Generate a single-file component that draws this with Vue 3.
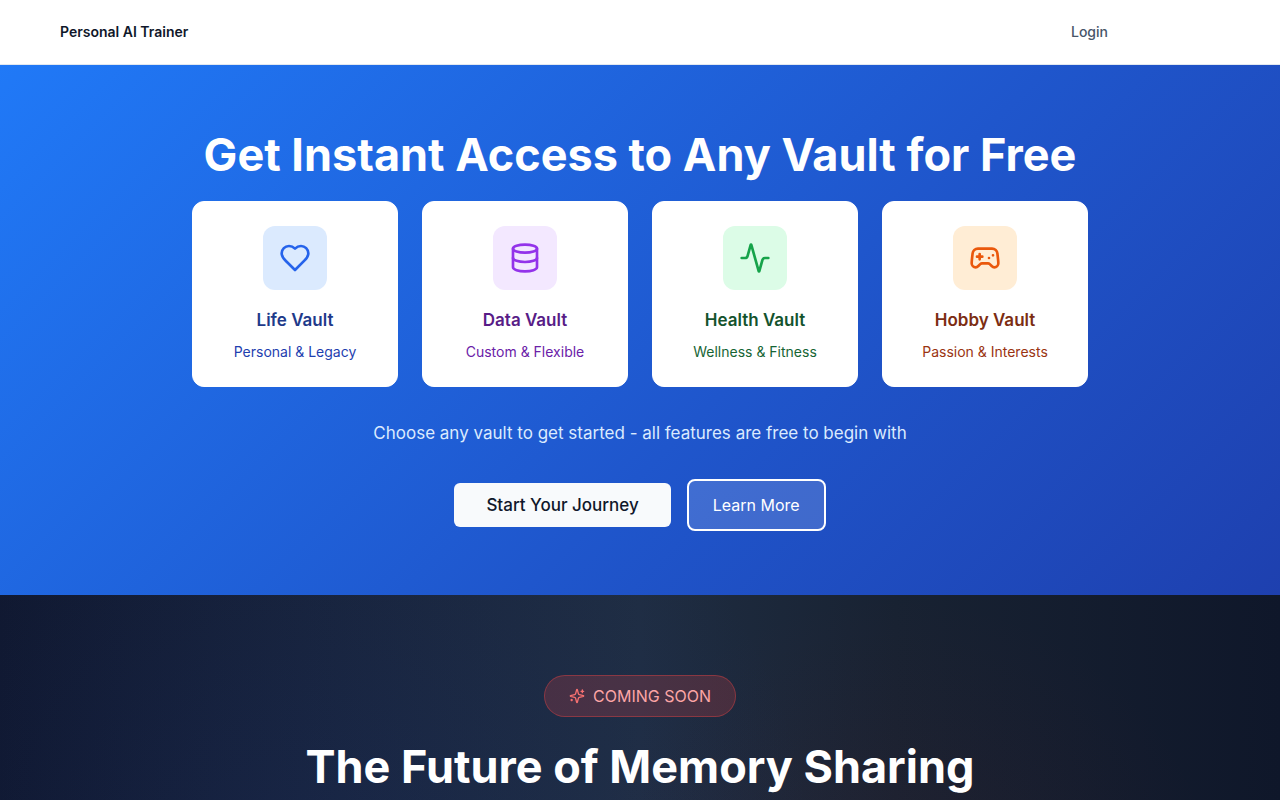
<template>
  <div class="page">
    <header class="topbar">
      <div class="topbar-inner">
        <a href="#" class="brand">Personal AI Trainer</a>
        <a href="#login" class="login">Login</a>
      </div>
    </header>

    <main>
      <section class="hero">
        <h1 class="headline">Get Instant Access to Any Vault for Free</h1>
        <div class="vaults">
          <article v-for="vault in vaults" :key="vault.key" class="vault" :class="vault.key">
            <div class="vault-icon">
              <svg viewBox="0 0 24 24" class="icon" aria-hidden="true">
                <path v-for="d in vault.paths" :key="d" :d="d" />
              </svg>
            </div>
            <h3 class="vault-title">{{ vault.title }}</h3>
            <p class="vault-text">{{ vault.text }}</p>
          </article>
        </div>
        <p class="hero-text">Choose any vault to get started - all features are free to begin with</p>
        <div class="actions">
          <button type="button" class="btn-start">Start Your Journey</button>
          <button type="button" class="btn-more">Learn More</button>
        </div>
      </section>

      <section id="future" class="future">
        <div class="badge">
          <svg viewBox="0 0 24 24" class="icon badge-icon" aria-hidden="true">
            <path d="M9.937 15.5A2 2 0 0 0 8.5 14.063l-6.135-1.582a.5.5 0 0 1 0-.962L8.5 9.936A2 2 0 0 0 9.937 8.5l1.582-6.135a.5.5 0 0 1 .963 0L14.063 8.5A2 2 0 0 0 15.5 9.937l6.135 1.581a.5.5 0 0 1 0 .964L15.5 14.063a2 2 0 0 0-1.437 1.437l-1.582 6.135a.5.5 0 0 1-.963 0z" />
            <path d="M20 3v4M22 5h-4M4 17v2M5 18H3" />
          </svg>
          <span>COMING SOON</span>
        </div>
        <h2 class="headline">The Future of Memory Sharing</h2>
      </section>
    </main>
  </div>
</template>

<script setup>
const vaults = [
  {
    key: 'life',
    title: 'Life Vault',
    text: 'Personal & Legacy',
    paths: [
      'M19 14c1.49-1.46 3-3.21 3-5.5A5.5 5.5 0 0 0 16.5 3c-1.76 0-3 .5-4.5 2-1.5-1.5-2.74-2-4.5-2A5.5 5.5 0 0 0 2 8.5c0 2.3 1.5 4.05 3 5.5l7 7Z',
    ],
  },
  {
    key: 'data',
    title: 'Data Vault',
    text: 'Custom & Flexible',
    paths: [
      'M3 5a9 3 0 1 0 18 0a9 3 0 1 0-18 0',
      'M3 5V19A9 3 0 0 0 21 19V5',
      'M3 12A9 3 0 0 0 21 12',
    ],
  },
  {
    key: 'health',
    title: 'Health Vault',
    text: 'Wellness & Fitness',
    paths: [
      'M22 12h-2.48a2 2 0 0 0-1.93 1.46l-2.35 8.36a.25.25 0 0 1-.48 0L9.24 2.18a.25.25 0 0 0-.48 0l-2.35 8.36A2 2 0 0 1 4.49 12H2',
    ],
  },
  {
    key: 'hobby',
    title: 'Hobby Vault',
    text: 'Passion & Interests',
    paths: [
      'M6 11h4M8 9v4M15 12h.01M18 10h.01',
      'M17.32 5H6.68a4 4 0 0 0-3.978 3.59c-.006.052-.01.101-.017.152C2.604 9.416 2 14.456 2 16a3 3 0 0 0 3 3c1 0 1.5-.5 2-1l1.414-1.414A2 2 0 0 1 9.828 16h4.344a2 2 0 0 1 1.414.586L17 18c.5.5 1 1 2 1a3 3 0 0 0 3-3c0-1.545-.604-6.584-.685-7.258-.007-.05-.011-.1-.017-.151A4 4 0 0 0 17.32 5z',
    ],
  },
]
</script>

<style>
body {
  margin: 0;
  background: #0f172a;
}
</style>

<style scoped>
.page {
  font-family: Inter, sans-serif;
  font-size: 16px;
  line-height: 24px;
  color: #0f172a;
}
h1, h2, h3, p {
  margin: 0;
}
a {
  text-decoration: none;
}
.topbar {
  background: #fff;
  border-bottom: 1px solid #e2e8f0;
}
.topbar-inner {
  display: flex;
  align-items: center;
  justify-content: space-between;
  height: 64px;
  padding: 0 172px 0 60px;
  font-size: 14px;
  line-height: 20px;
}
.brand {
  font-weight: 600;
  color: #0f172a;
}
.login {
  font-weight: 500;
  color: #475569;
}
.hero {
  display: flex;
  flex-direction: column;
  align-items: center;
  padding: 64px 24px;
  text-align: center;
  background: linear-gradient(135deg, #2079f7, #1f56cc 58%, #1e40af);
}
.headline {
  font-size: 45px;
  line-height: 52px;
  font-weight: 700;
  color: #fff;
}
.vaults {
  display: grid;
  grid-template-columns: repeat(4, 1fr);
  gap: 24px;
  width: 100%;
  max-width: 896px;
  margin: 20px 0 32px;
}
.vault {
  padding: 24px;
  border: 1px solid #fff;
  border-radius: 12px;
  background: #fff;
}
.vault-icon {
  display: flex;
  align-items: center;
  justify-content: center;
  width: 64px;
  height: 64px;
  margin: 0 auto 16px;
  border-radius: 12px;
}
.icon {
  width: 32px;
  height: 32px;
  fill: none;
  stroke: currentColor;
  stroke-width: 2;
  stroke-linecap: round;
  stroke-linejoin: round;
}
.vault-title {
  margin-bottom: 8px;
  font-size: 17px;
  line-height: 28px;
  font-weight: 600;
}
.vault-text {
  font-size: 14px;
  line-height: 20px;
  white-space: nowrap;
}
.life .vault-icon { background: #dbeafe; color: #2563eb; }
.life .vault-title { color: #1e3a8a; }
.life .vault-text { color: #1e40af; }
.data .vault-icon { background: #f3e8ff; color: #9333ea; }
.data .vault-title { color: #581c87; }
.data .vault-text { color: #6b21a8; }
.health .vault-icon { background: #dcfce7; color: #16a34a; }
.health .vault-title { color: #14532d; }
.health .vault-text { color: #166534; }
.hobby .vault-icon { background: #ffedd5; color: #ea580c; }
.hobby .vault-title { color: #7c2d12; }
.hobby .vault-text { color: #9a3412; }
.hero-text {
  margin-bottom: 32px;
  font-size: 17px;
  line-height: 28px;
  color: #dbeafe;
}
.actions {
  display: flex;
  align-items: center;
  gap: 16px;
}
.actions button {
  font-family: inherit;
  cursor: pointer;
}
.btn-start {
  height: 44px;
  padding: 0 32px;
  border: 0;
  border-radius: 6px;
  background: #f8fafc;
  color: #0f172a;
  font-size: 17px;
  line-height: 28px;
  font-weight: 500;
}
.btn-more {
  padding: 12px 24px;
  border: 2px solid #fff;
  border-radius: 8px;
  background: rgba(255, 255, 255, 0.15);
  color: #fff;
  font-size: 16px;
  line-height: 24px;
  font-weight: 400;
}
.future {
  display: flex;
  flex-direction: column;
  align-items: center;
  gap: 24px;
  padding: 80px 24px;
  text-align: center;
  background:
    radial-gradient(circle at 25% 100%, rgba(30, 64, 175, 0.12), transparent 50%),
    radial-gradient(circle at 70% 120%, rgba(153, 27, 27, 0.08), transparent 35%),
    linear-gradient(90deg, #10182f, #1f2d42 50%, #182232 70%, #0f172a);
}
.badge {
  display: flex;
  align-items: center;
  gap: 8px;
  padding: 8px 24px;
  border: 1px solid rgba(239, 68, 68, 0.4);
  border-radius: 24px;
  background: rgba(239, 68, 68, 0.2);
  color: #fca5a5;
}
.badge-icon {
  width: 16px;
  height: 16px;
  color: #f87171;
}
</style>
